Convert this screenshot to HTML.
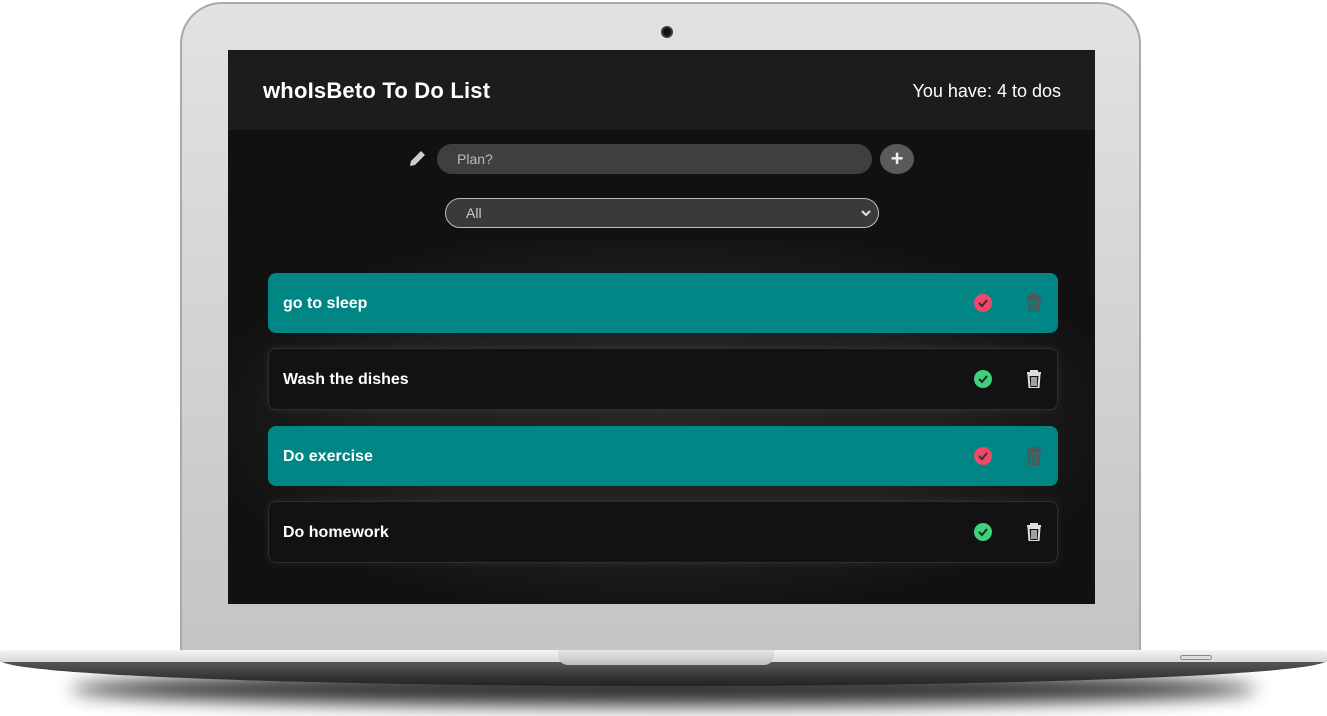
<!DOCTYPE html>
<html><head><meta charset="utf-8"><style>
*{margin:0;padding:0;box-sizing:border-box}
body{width:1327px;height:716px;background:#fff;position:relative;overflow:hidden;font-family:"Liberation Sans",sans-serif}
.shadow{position:absolute;left:70px;top:672px;width:1187px;height:34px;border-radius:50%;background:#000;filter:blur(9px);opacity:.8}
.lid{position:absolute;left:180px;top:2px;width:961px;height:660px;border-radius:42px 42px 0 0;background:linear-gradient(#e2e2e2,#c4c4c4);border:2px solid #a9a9a9;border-bottom:none}
.cam{position:absolute;left:661px;top:26px;width:12px;height:12px;border-radius:50%;background:#111;border:2px solid #3a3a3a}
.screen{position:absolute;left:228px;top:50px;width:867px;height:554px;background:#111;overflow:hidden}
.hdr{height:80px;background:#1c1c1c;position:relative}
.title{position:absolute;left:35px;top:28px;color:#fff;font-weight:bold;font-size:22px;letter-spacing:.2px}
.count{position:absolute;right:34px;top:31px;color:#fff;font-size:18px}
.pen{position:absolute;left:180px;top:98px}
.inp{position:absolute;left:209px;top:94px;width:435px;height:30px;border-radius:15px;background:#3f3f3f;color:#bbb;font-size:14px;padding:7px 20px}
.plus{position:absolute;left:652px;top:94px;width:34px;height:30px;border-radius:50%;background:#5a5a5a;color:#eee;font-size:22px;font-weight:bold;text-align:center;line-height:29px}
.sel{position:absolute;left:217px;top:148px;width:434px;height:30px;border-radius:15px;background:#3a3a3a;border:1px solid #bbb;color:#ccc;font-size:14px;padding:6px 20px}
.chev{position:absolute;right:6px;top:9px}
.glow{position:absolute;left:-40px;top:190px;width:947px;height:400px;background:radial-gradient(ellipse 50% 50% at 50% 45%,#262626 0%,#202020 60%,rgba(17,17,17,0) 100%)}
.item{position:absolute;left:40px;width:790px;height:60px;border-radius:8px;color:#fff;font-weight:bold;font-size:16px;padding:22px 15px 0}
.teal{background:#008685}
.dark{background:#121212;border:1px solid #2e2e2e;box-shadow:0 0 10px rgba(255,255,255,.08);padding-left:14px}
.ic{position:absolute;top:21px}
.base{position:absolute;left:0;top:650px;width:1327px;height:12px;background:linear-gradient(#f4f4f4,#d8d8d8);border-radius:3px}
.under{position:absolute;left:0;top:660px;width:1327px;height:26px;background:linear-gradient(#5a5a5a,#222);border-radius:0 0 50% 50%/0 0 100% 100%}
.notch{position:absolute;left:558px;top:650px;width:216px;height:15px;border-radius:0 0 10px 10px;background:linear-gradient(#e6e6e6,#bdbdbd)}
.led{position:absolute;left:1180px;top:655px;width:32px;height:5px;border-radius:3px;border:1px solid #888;background:#ddd}
</style></head><body>
<div class="shadow"></div>
<div class="lid"></div>
<div class="cam"></div>
<div class="screen">
 <div class="hdr"><div class="title">whoIsBeto To Do List</div><div class="count">You have: 4 to dos</div></div>
 <svg class="pen" width="20" height="20" viewBox="0 0 20 20"><path d="M2 18l1-5L13 3l4 4L7 17z" fill="#ccc"/></svg>
 <div class="inp">Plan?</div>
 <div class="plus">+</div>
 <div class="sel">All<svg class="chev" width="12" height="10" viewBox="0 0 12 10"><path d="M2 3l4 4 4-4" stroke="#ddd" stroke-width="2.2" fill="none"/></svg></div>
 <div class="glow"></div>
 <div class="item teal" style="top:223px">go to sleep
  <svg class="ic" style="left:706px" width="18" height="18" viewBox="0 0 18 18"><circle cx="9" cy="9" r="9" fill="#f0476a"/><path d="M5 9l3 3 5-6" stroke="#333" stroke-width="2" fill="none"/></svg>
  <svg class="ic" style="left:758px" width="16" height="18" viewBox="0 0 16 18"><path d="M1 3h14M5 3V1h6v2M2.5 5h11l-1 13h-9z" stroke="#555" stroke-width="2" fill="none"/><path d="M6 7v9M8 7v9M10 7v9" stroke="#555" stroke-width="1.4"/></svg></div>
 <div class="item dark" style="top:298px;height:62px">Wash the dishes
  <svg class="ic" style="left:705px" width="18" height="18" viewBox="0 0 18 18"><circle cx="9" cy="9" r="9" fill="#3fd17a"/><path d="M5 9l3 3 5-6" stroke="#222" stroke-width="2" fill="none"/></svg>
  <svg class="ic" style="left:757px" width="16" height="18" viewBox="0 0 16 18"><path d="M1 3h14M5 3V1h6v2M2.5 5h11l-1 13h-9z" stroke="#ddd" stroke-width="2" fill="none"/><path d="M6 7v9M8 7v9M10 7v9" stroke="#ddd" stroke-width="1.4"/></svg></div>
 <div class="item teal" style="top:376px">Do exercise
  <svg class="ic" style="left:706px" width="18" height="18" viewBox="0 0 18 18"><circle cx="9" cy="9" r="9" fill="#f0476a"/><path d="M5 9l3 3 5-6" stroke="#333" stroke-width="2" fill="none"/></svg>
  <svg class="ic" style="left:758px" width="16" height="18" viewBox="0 0 16 18"><path d="M1 3h14M5 3V1h6v2M2.5 5h11l-1 13h-9z" stroke="#555" stroke-width="2" fill="none"/><path d="M6 7v9M8 7v9M10 7v9" stroke="#555" stroke-width="1.4"/></svg></div>
 <div class="item dark" style="top:451px;height:62px">Do homework
  <svg class="ic" style="left:705px" width="18" height="18" viewBox="0 0 18 18"><circle cx="9" cy="9" r="9" fill="#3fd17a"/><path d="M5 9l3 3 5-6" stroke="#222" stroke-width="2" fill="none"/></svg>
  <svg class="ic" style="left:757px" width="16" height="18" viewBox="0 0 16 18"><path d="M1 3h14M5 3V1h6v2M2.5 5h11l-1 13h-9z" stroke="#ddd" stroke-width="2" fill="none"/><path d="M6 7v9M8 7v9M10 7v9" stroke="#ddd" stroke-width="1.4"/></svg></div>
</div>
<div class="under"></div>
<div class="base"></div>
<div class="notch"></div>
<div class="led"></div>
</body></html>
